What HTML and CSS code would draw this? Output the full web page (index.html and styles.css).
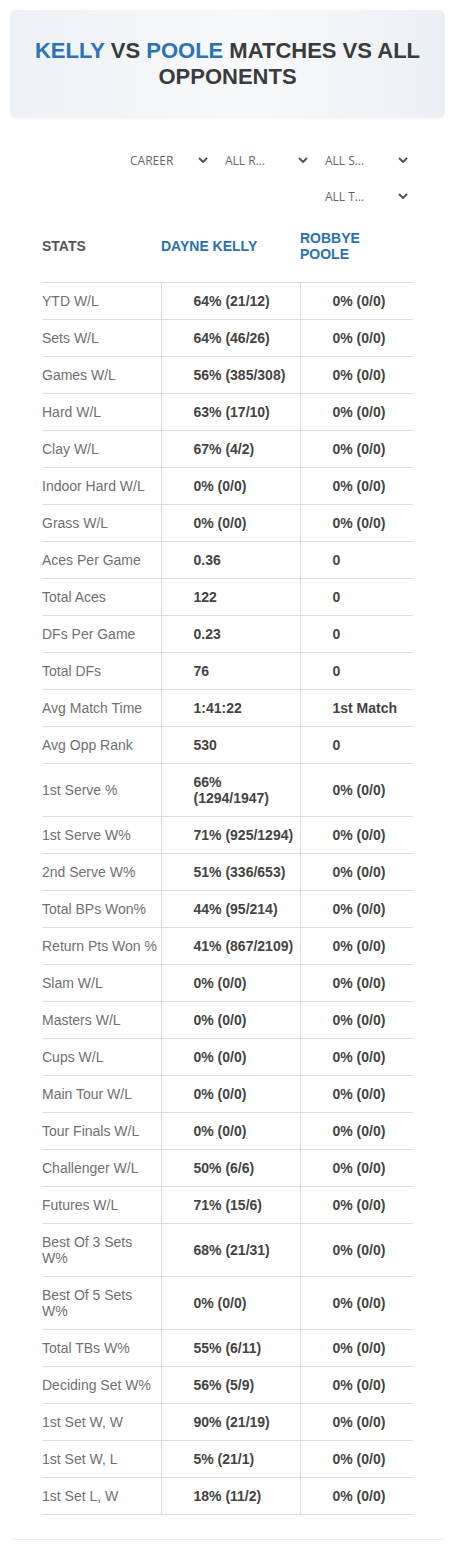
FILE: index.html
```html
<!DOCTYPE html>
<html lang="en">
<head>
    <meta charset="UTF-8">
    <meta name="viewport" content="width=device-width, initial-scale=1.0">
    <title>Kelly vs Poole Matches vs All Opponents</title>
    <link rel="stylesheet" href="styles.css">
</head>
<body>
    <div class="page">
        <div class="hero">
            <h1 class="title"><span class="hl">KELLY</span> VS <span class="hl">POOLE</span> MATCHES VS ALL OPPONENTS</h1>
        </div>

        <div class="panel">
            <div class="filters">
                <div class="filter"><span class="filter-text">CAREER</span><svg class="chev" width="10" height="6" viewBox="0 0 10 6"><path d="M1 1l4 4 4-4" fill="none" stroke="#555" stroke-width="2"/></svg></div>
                <div class="filter"><span class="filter-text">ALL R…</span><svg class="chev" width="10" height="6" viewBox="0 0 10 6"><path d="M1 1l4 4 4-4" fill="none" stroke="#555" stroke-width="2"/></svg></div>
                <div class="filter"><span class="filter-text">ALL S…</span><svg class="chev" width="10" height="6" viewBox="0 0 10 6"><path d="M1 1l4 4 4-4" fill="none" stroke="#555" stroke-width="2"/></svg></div>
                <div class="filter"><span class="filter-text">ALL T…</span><svg class="chev" width="10" height="6" viewBox="0 0 10 6"><path d="M1 1l4 4 4-4" fill="none" stroke="#555" stroke-width="2"/></svg></div>
            </div>

            <table class="stats">
                <colgroup>
                    <col class="c-label">
                    <col class="c-p1">
                    <col class="c-p2">
                </colgroup>
                <thead>
                    <tr>
                        <th class="th-stats">STATS</th>
                        <th class="th-player">DAYNE KELLY</th>
                        <th class="th-player">ROBBYE POOLE</th>
                    </tr>
                </thead>
                <tbody>
                    <tr><td>YTD W/L</td><td>64% (21/12)</td><td>0% (0/0)</td></tr>
                    <tr><td>Sets W/L</td><td>64% (46/26)</td><td>0% (0/0)</td></tr>
                    <tr><td>Games W/L</td><td>56% (385/308)</td><td>0% (0/0)</td></tr>
                    <tr><td>Hard W/L</td><td>63% (17/10)</td><td>0% (0/0)</td></tr>
                    <tr><td>Clay W/L</td><td>67% (4/2)</td><td>0% (0/0)</td></tr>
                    <tr><td>Indoor Hard W/L</td><td>0% (0/0)</td><td>0% (0/0)</td></tr>
                    <tr><td>Grass W/L</td><td>0% (0/0)</td><td>0% (0/0)</td></tr>
                    <tr><td>Aces Per Game</td><td>0.36</td><td>0</td></tr>
                    <tr><td>Total Aces</td><td>122</td><td>0</td></tr>
                    <tr><td>DFs Per Game</td><td>0.23</td><td>0</td></tr>
                    <tr><td>Total DFs</td><td>76</td><td>0</td></tr>
                    <tr><td>Avg Match Time</td><td>1:41:22</td><td>1st Match</td></tr>
                    <tr><td>Avg Opp Rank</td><td>530</td><td>0</td></tr>
                    <tr><td>1st Serve %</td><td>66% (1294/1947)</td><td>0% (0/0)</td></tr>
                    <tr><td>1st Serve W%</td><td>71% (925/1294)</td><td>0% (0/0)</td></tr>
                    <tr><td>2nd Serve W%</td><td>51% (336/653)</td><td>0% (0/0)</td></tr>
                    <tr><td>Total BPs Won%</td><td>44% (95/214)</td><td>0% (0/0)</td></tr>
                    <tr><td>Return Pts Won %</td><td>41% (867/2109)</td><td>0% (0/0)</td></tr>
                    <tr><td>Slam W/L</td><td>0% (0/0)</td><td>0% (0/0)</td></tr>
                    <tr><td>Masters W/L</td><td>0% (0/0)</td><td>0% (0/0)</td></tr>
                    <tr><td>Cups W/L</td><td>0% (0/0)</td><td>0% (0/0)</td></tr>
                    <tr><td>Main Tour W/L</td><td>0% (0/0)</td><td>0% (0/0)</td></tr>
                    <tr><td>Tour Finals W/L</td><td>0% (0/0)</td><td>0% (0/0)</td></tr>
                    <tr><td>Challenger W/L</td><td>50% (6/6)</td><td>0% (0/0)</td></tr>
                    <tr><td>Futures W/L</td><td>71% (15/6)</td><td>0% (0/0)</td></tr>
                    <tr><td>Best Of 3 Sets W%</td><td>68% (21/31)</td><td>0% (0/0)</td></tr>
                    <tr><td>Best Of 5 Sets W%</td><td>0% (0/0)</td><td>0% (0/0)</td></tr>
                    <tr><td>Total TBs W%</td><td>55% (6/11)</td><td>0% (0/0)</td></tr>
                    <tr><td>Deciding Set W%</td><td>56% (5/9)</td><td>0% (0/0)</td></tr>
                    <tr><td>1st Set W, W</td><td>90% (21/19)</td><td>0% (0/0)</td></tr>
                    <tr><td>1st Set W, L</td><td>5% (21/1)</td><td>0% (0/0)</td></tr>
                    <tr><td>1st Set L, W</td><td>18% (11/2)</td><td>0% (0/0)</td></tr>
                </tbody>
            </table>
        </div>
    </div>
</body>
</html>
```

FILE: styles.css
```css
body {
    margin: 0;
    background: #fff;
    font-family: "Liberation Sans", Arial, sans-serif;
    color: #444;
}
.page {
    padding: 10px;
}
.hero {
    background: linear-gradient(90deg, #edf1f5 0%, #f8f9fb 55%, #ebeff4 100%);
    border-radius: 6px;
    padding: 28px 16px;
    box-shadow: 0 1px 2px rgba(0, 0, 0, 0.04);
}
.title {
    margin: 0;
    text-align: center;
    font-size: 22px;
    line-height: 26px;
    font-weight: bold;
    color: #3b3b3b;
}
.title .hl {
    color: #2a73b6;
}
.panel {
    margin: 0 2px;
    padding: 28px 30px 24px;
    border-bottom: 1px solid #eceef0;
}
/* filtros */
.filters {
    display: flex;
    flex-wrap: wrap;
    justify-content: flex-end;
    column-gap: 8px;
    row-gap: 8px;
}
.filter {
    width: 92px;
    height: 28px;
    box-sizing: border-box;
    padding: 0 5px 0 4px;
    display: flex;
    align-items: center;
    justify-content: space-between;
    font-family: "Open Sans", sans-serif;
    font-size: 12px;
    color: #666;
}
.filter:first-child {
    padding-left: 9px;
}
.filter-text {
    white-space: nowrap;
}
.chev {
    display: block;
}
/* tabla */
.stats {
    width: 100%;
    border-collapse: collapse;
    table-layout: fixed;
}
.c-label { width: 119px; }
.c-p1 { width: 139px; }
.stats th {
    text-align: left;
    font-size: 14px;
    line-height: 16px;
    font-weight: bold;
    padding: 20px 10px 20px 0;
    border-bottom: 1px solid #ddd;
    vertical-align: middle;
}
.th-stats {
    color: #555;
}
.th-player {
    color: #2c70b0;
}
.stats td {
    font-size: 14px;
    line-height: 16px;
    padding: 10px 3px 10px 32px;
    border-bottom: 1px solid #ddd;
    border-left: 1px solid #ddd;
    font-weight: bold;
    color: #444;
    vertical-align: middle;
}
.stats td:first-child {
    padding: 10px 2px 10px 0;
    border-left: none;
    font-weight: normal;
    color: #707070;
}
```
